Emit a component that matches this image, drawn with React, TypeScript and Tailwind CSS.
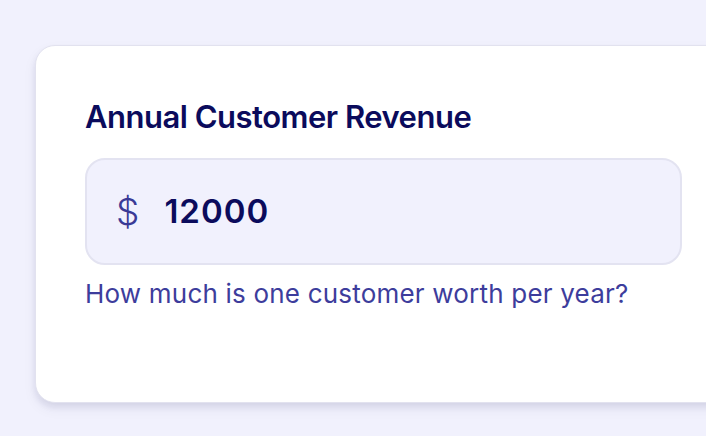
export default function App() {
  return (
    <div
      className="h-[436px] w-[706px] overflow-hidden bg-[#f1f1fd] pt-[45px] pl-[35px]"
      style={{ fontFamily: "Inter, 'Noto Sans', sans-serif" }}
    >
      <div className="w-[700px] rounded-[20px] border border-[#e2e2ef] bg-white px-[49px] pt-[55px] pb-[92px] shadow-[0_4px_6px_rgba(20,20,80,0.08),0_6px_14px_rgba(20,20,80,0.06)]">
        <label className="block text-[31px] font-semibold leading-[32px] tracking-[-0.5px] text-[#0b0b5c]">
          Annual Customer Revenue
        </label>
        <div className="mt-[25px] flex h-[107px] w-[597px] items-center rounded-[20px] border-2 border-[#e3e3f1] bg-[#f1f1fd] pl-[29px]">
          <span className="text-[37px] font-light leading-none text-[#3a3a96]">$</span>
          <span className="ml-[25px] text-[33px] font-semibold tracking-[1px] text-[#0b0b5c]">12000</span>
        </div>
        <p className="mt-[13px] text-[26px] leading-[32px] tracking-[0.2px] text-[#3d3d9c]">
          How much is one customer worth per year?
        </p>
      </div>
    </div>
  );
}
